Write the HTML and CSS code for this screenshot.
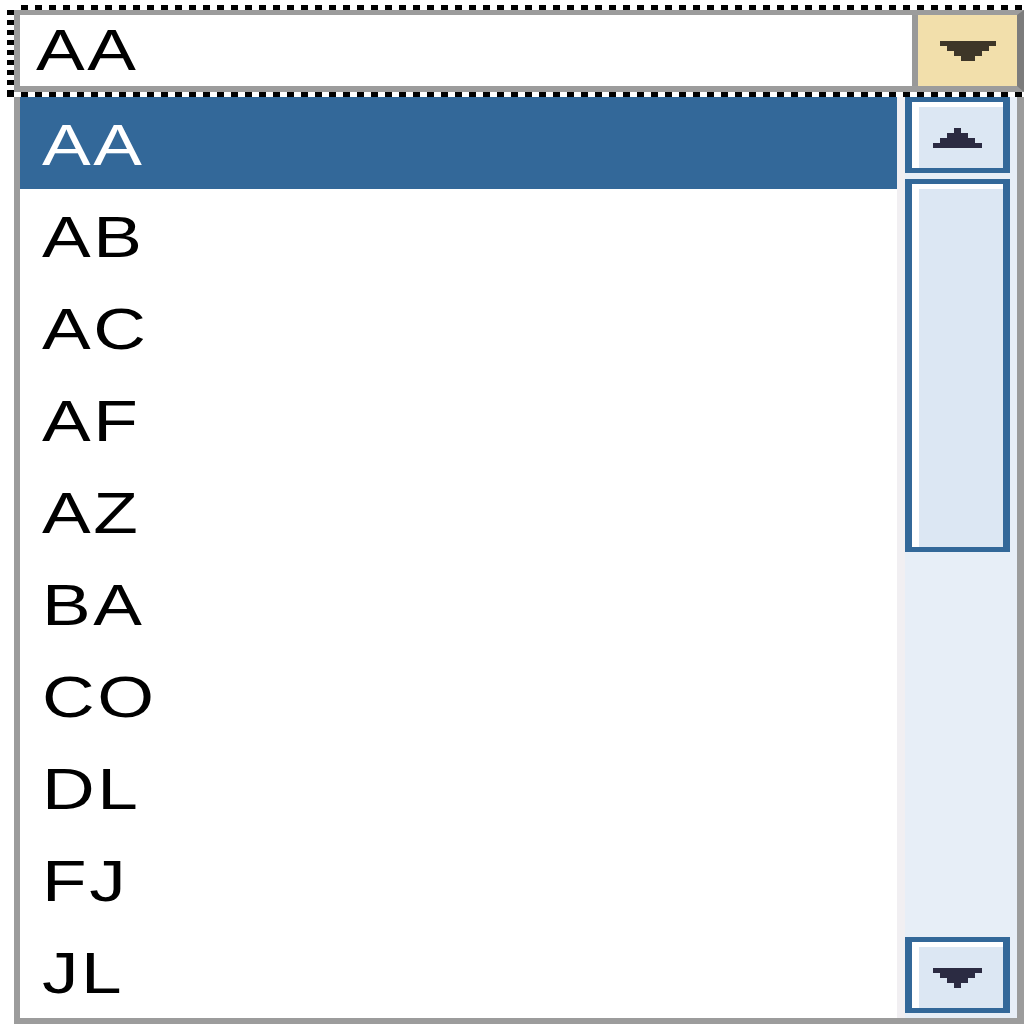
FILE: index.html
```html
<!DOCTYPE html>
<html>
<head>
<meta charset="utf-8">
<link rel="stylesheet" href="styles.css">
</head>
<body>
<div class="focus">
  <div class="combo">
    <div class="combo-text"><span class="txt">AA</span></div>
    <div class="combo-btn">
      <svg class="arrow-combo" width="56" height="20" viewBox="0 0 56 20" shape-rendering="crispEdges"><rect x="0" y="0" width="56" height="5"/><rect x="7" y="5" width="42" height="5"/><rect x="14" y="10" width="28" height="5"/><rect x="21" y="15" width="14" height="5"/></svg>
    </div>
  </div>
</div>
<div class="list">
  <div class="items">
    <div class="item selected"><span class="txt">AA</span></div>
    <div class="item"><span class="txt">AB</span></div>
    <div class="item"><span class="txt">AC</span></div>
    <div class="item"><span class="txt">AF</span></div>
    <div class="item"><span class="txt">AZ</span></div>
    <div class="item"><span class="txt">BA</span></div>
    <div class="item"><span class="txt">CO</span></div>
    <div class="item"><span class="txt">DL</span></div>
    <div class="item"><span class="txt">FJ</span></div>
    <div class="item"><span class="txt">JL</span></div>
  </div>
  <div class="scrollbar">
    <div class="sb-btn">
      <svg class="arrow-sb" width="49" height="20" viewBox="0 0 49 20" shape-rendering="crispEdges"><rect x="21" y="0" width="7" height="5"/><rect x="14" y="5" width="21" height="5"/><rect x="7" y="10" width="35" height="5"/><rect x="0" y="15" width="49" height="5"/></svg>
    </div>
    <div class="sb-thumb"></div>
    <div class="sb-spacer"></div>
    <div class="sb-btn">
      <svg class="arrow-sb" width="49" height="20" viewBox="0 0 49 20" shape-rendering="crispEdges"><rect x="0" y="0" width="49" height="5"/><rect x="7" y="5" width="35" height="5"/><rect x="14" y="10" width="21" height="5"/><rect x="21" y="15" width="7" height="5"/></svg>
    </div>
  </div>
</div>
</body>
</html>
```
FILE: styles.css
```css
html, body {
  margin: 0;
  padding: 0;
  background: #ffffff;
  overflow: hidden;
  width: 1024px;
  height: 1024px;
}
body {
  font-family: "Liberation Sans", Arial, sans-serif;
  font-size: 57px;
}
.txt {
  display: inline-block;
  transform: scaleX(1.28);
  transform-origin: left center;
  letter-spacing: 2px;
  white-space: nowrap;
}
.focus {
  margin: 5px 0 0 7px;
  padding: 5px 0 5px 7px;
  width: 1010px;
  background:
    repeating-linear-gradient(to right, #000 0 7px, transparent 7px 14px) 14px 0 / 100% 5px no-repeat,
    repeating-linear-gradient(to right, #000 0 7px, transparent 7px 14px) 0 100% / 100% 5px no-repeat,
    repeating-linear-gradient(to bottom, #000 0 5px, transparent 5px 10px) 0 5px / 7px 87px no-repeat;
}
.combo {
  display: flex;
  height: 71px;
  border-style: solid;
  border-color: #9c9c9c #7c7c7c #9c9c9c #9c9c9c;
  border-width: 5px 7px 6px 6px;
  background: #ffffff;
}
.combo-text {
  flex: 1;
  padding-left: 16px;
  line-height: 71px;
  color: #000;
}
.combo-btn {
  width: 99px;
  border-left: 6px solid #999999;
  background: #f2dfab;
  display: flex;
  align-items: center;
  justify-content: center;
}
.arrow-combo {
  width: 56px;
  height: 20px;
  flex: none;
  fill: #3e3628;
  display: block;
}
.list {
  margin-left: 14px;
  width: 1010px;
  height: 927px;
  box-sizing: border-box;
  border-style: solid;
  border-color: #9c9c9c;
  border-width: 0 7px 6px 6px;
  display: flex;
  background: #fff;
}
.items {
  flex: 1;
}
.item {
  height: 92px;
  box-sizing: border-box;
  padding: 4px 0 0 22px;
  line-height: 88px;
  color: #000;
}
.item.selected {
  background: #336899;
  color: #ffffff;
}
.scrollbar {
  width: 120px;
  box-sizing: border-box;
  border-left: 8px solid #f1eff2;
  padding: 0 7px 5px 0;
  background: #e7eef7;
  display: flex;
  flex-direction: column;
}
.sb-btn, .sb-thumb {
  box-sizing: border-box;
  border-style: solid;
  border-color: #336899;
  border-width: 5px 7px;
  background: #dce7f3;
  box-shadow: inset 7px 5px 0 #ffffff;
  flex: none;
}
.sb-btn {
  height: 76px;
  display: flex;
  align-items: center;
  justify-content: center;
  padding-top: 5px;
}
.sb-thumb {
  height: 373px;
  margin-top: 6px;
}
.sb-spacer {
  flex: 1;
}
.arrow-sb {
  width: 49px;
  height: 20px;
  flex: none;
  fill: #2b2b42;
  display: block;
}
```
